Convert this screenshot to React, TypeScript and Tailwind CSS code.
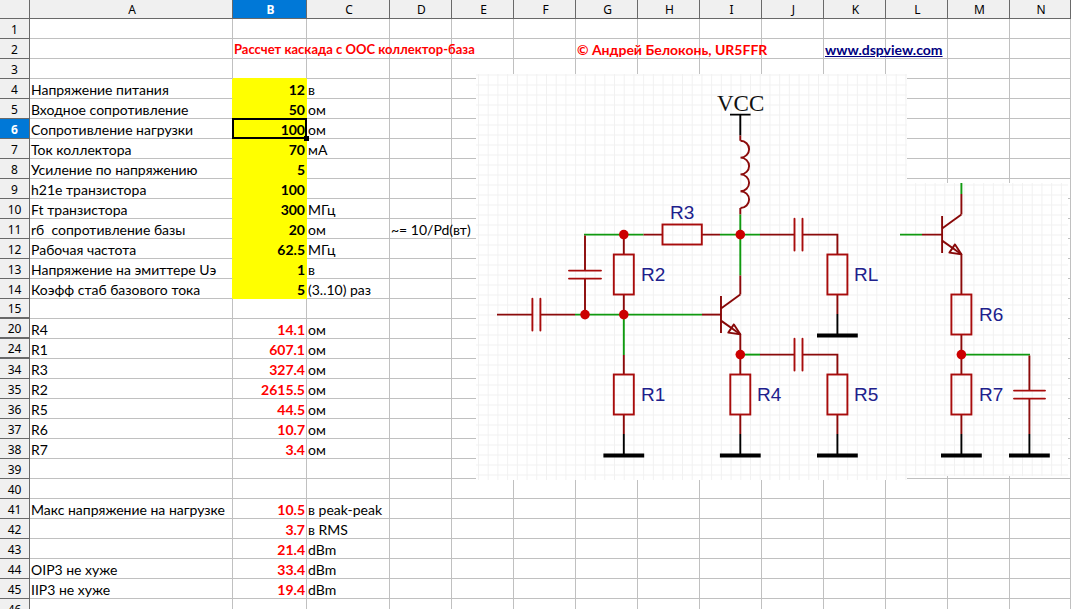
import { clsx } from "clsx";

type Tone = "input" | "result";

interface SheetRow {
  num: number;
  label?: string;
  value?: string;
  unit?: string;
  note?: string;
  tone?: Tone;
  // rows are hidden right below this one
  folded?: boolean;
}

const columns = ["A", "B", "C", "D", "E", "F", "G", "H", "I", "J", "K", "L", "M", "N"];
const activeColumn = "B";
const activeRow = 6;

const rows: SheetRow[] = [
  { num: 1 },
  { num: 2 },
  { num: 3 },
  { num: 4, label: "Напряжение питания", value: "12", unit: "в", tone: "input" },
  { num: 5, label: "Входное сопротивление", value: "50", unit: "ом", tone: "input" },
  { num: 6, label: "Сопротивление нагрузки", value: "100", unit: "ом", tone: "input" },
  { num: 7, label: "Ток коллектора", value: "70", unit: "мА", tone: "input" },
  { num: 8, label: "Усиление по напряжению", value: "5", tone: "input" },
  { num: 9, label: "h21e транзистора", value: "100", tone: "input" },
  { num: 10, label: "Ft транзистора", value: "300", unit: "МГц", tone: "input" },
  { num: 11, label: "rб  сопротивление базы", value: "20", unit: "ом", note: "~= 10/Pd(вт)", tone: "input" },
  { num: 12, label: "Рабочая частота", value: "62.5", unit: "МГц", tone: "input" },
  { num: 13, label: "Напряжение на эмиттере Uэ", value: "1", unit: "в", tone: "input" },
  { num: 14, label: "Коэфф стаб базового тока", value: "5", unit: "(3..10) раз", tone: "input" },
  { num: 15, folded: true },
  { num: 20, label: "R4", value: "14.1", unit: "ом", tone: "result", folded: true },
  { num: 24, label: "R1", value: "607.1", unit: "ом", tone: "result", folded: true },
  { num: 34, label: "R3", value: "327.4", unit: "ом", tone: "result" },
  { num: 35, label: "R2", value: "2615.5", unit: "ом", tone: "result" },
  { num: 36, label: "R5", value: "44.5", unit: "ом", tone: "result" },
  { num: 37, label: "R6", value: "10.7", unit: "ом", tone: "result" },
  { num: 38, label: "R7", value: "3.4", unit: "ом", tone: "result" },
  { num: 39 },
  { num: 40 },
  { num: 41, label: "Макс напряжение на нагрузке", value: "10.5", unit: "в peak-peak", tone: "result" },
  { num: 42, value: "3.7", unit: "в RMS", tone: "result" },
  { num: 43, value: "21.4", unit: "dBm", tone: "result" },
  { num: 44, label: "OIP3 не хуже", value: "33.4", unit: "dBm", tone: "result" },
  { num: 45, label: "IIP3 не хуже", value: "19.4", unit: "dBm", tone: "result" },
  { num: 46 },
];

const App = () => {
  return (
    <main className="relative h-screen w-full overflow-hidden bg-white">
      <table className="w-full table-fixed border-separate border-spacing-0 font-['Lato','Noto_Sans',sans-serif] text-black">
        <colgroup>
          <col className="w-[30px]" />
          <col className="w-[203px]" />
          <col className="w-[74px]" />
          <col className="w-[83px]" />
          {columns.slice(3, -1).map((name) => (
            <col key={name} className="w-[62px]" />
          ))}
          <col />
        </colgroup>
        <thead>
          <tr>
            <td className={clsx(headCell, "h-[19px] bg-[#f0f0f0]")} />
            {columns.map((name) => (
              <th
                key={name}
                scope="col"
                className={clsx(
                  headCell,
                  "h-[19px] pl-0.5",
                  name === activeColumn ? "bg-[#0078d7] font-bold text-white" : "bg-[#f0f0f0] font-normal",
                )}
              >
                {name}
              </th>
            ))}
          </tr>
        </thead>
        <tbody>
          {rows.map((row) => (
            <Row key={row.num} row={row} />
          ))}
        </tbody>
      </table>
      <AmplifierSchematic />
      <EmitterSchematic />
    </main>
  );
};
export default App;

const Row = ({ row }: { row: SheetRow }) => {
  const isInput = row.tone === "input";
  const isActive = row.num === activeRow;

  return (
    <tr>
      <th
        scope="row"
        className={clsx(
          headCell,
          "h-5",
          row.folded && "border-b-2",
          isActive ? "bg-[#0078d7] font-bold text-white" : "bg-[#f0f0f0] font-normal",
        )}
      >
        {row.num}
      </th>
      <td className={clsx(cell, "border-b-[#c0c0c0]", isInput ? "border-r-[#ffff00]" : "border-r-[#c0c0c0]")}>
        {row.label}
      </td>
      <td
        className={clsx(
          cell,
          "relative font-bold",
          row.num === 2 ? "text-left text-[13px] text-[#ff0000]" : "text-right",
          row.tone === "result" && "text-[#ff0000]",
          isInput && "bg-[#ffff00]",
          isInput || row.num === 3 ? "border-b-[#ffff00]" : "border-b-[#c0c0c0]",
          isInput ? "border-r-[#ffff00]" : "border-r-[#c0c0c0]",
        )}
      >
        {row.num === 2 ? "Рассчет каскада с ООС коллектор-база" : row.value}
        {isActive && (
          <span className="absolute -inset-px z-10 border-2 border-black">
            <span className="absolute -right-1 -bottom-1 size-[5px] bg-black" />
          </span>
        )}
      </td>
      <td className={clsx(cell, gridLine)}>{row.unit}</td>
      <td className={clsx(cell, gridLine)}>{row.note}</td>
      {columns.slice(4).map((name) => (
        <td key={name} className={clsx(cell, gridLine, "font-bold")}>
          {row.num === 2 && name === "G" && <span className="text-[#ff0000]">© Андрей Белоконь, UR5FFR</span>}
          {row.num === 2 && name === "K" && (
            <a href="http://www.dspview.com" className="text-[#000080] underline">
              www.dspview.com
            </a>
          )}
        </td>
      ))}
    </tr>
  );
};

// Schematic parts, drawn in sheet coordinates
const Grid = ({ id, x, y, width, height }: { id: string; x: number; y: number; width: number; height: number }) => (
  <>
    <defs>
      <pattern id={id} x="487.7" y="84.5" width="9.715" height="10" patternUnits="userSpaceOnUse">
        <path d="M0.5 0V10M0 0.5H9.715" stroke="#f1f1f1" strokeWidth="1" />
      </pattern>
    </defs>
    <rect x={x} y={y} width={width} height={height} fill="#fff" />
    <rect x={x} y={y} width={width} height={height} fill={`url(#${id})`} />
  </>
);

const Wire = ({ d }: { d: string }) => <path d={d} fill="none" stroke="#109a10" strokeWidth="1.9" />;
const Lead = ({ d }: { d: string }) => <path d={d} fill="none" stroke="#8b0a0a" strokeWidth="1.9" />;
const Plates = ({ d }: { d: string }) => (
  <path d={d} fill="none" stroke="#a80c0c" strokeWidth="1.9" strokeLinecap="round" />
);
const Dot = ({ x, y }: { x: number; y: number }) => <circle cx={x} cy={y} r="4.8" fill="#cc0000" />;

// vertical resistor, x is its axis and y the top of the body
const Resistor = ({ x, y }: { x: number; y: number }) => (
  <rect x={x - 10} y={y} width="20" height="40" fill="none" stroke="#a80c0c" strokeWidth="1.9" />
);

const Ground = ({ x, y }: { x: number; y: number }) => (
  <g stroke="#000">
    <path d={`M${x} ${y}v21`} strokeWidth="1.9" />
    <path d={`M${x - 20.4} ${y + 21.6}h40.8`} strokeWidth="4" />
  </g>
);

// npn transistor, x is the collector axis and y the base line
const Transistor = ({ x, y }: { x: number; y: number }) => (
  <g fill="none" stroke="#880808" strokeWidth="1.9" strokeLinejoin="round">
    <path d={`M${x - 19.3} ${y - 18.6}v37`} />
    <path d={`M${x - 19.3} ${y - 6}L${x} ${y - 20}`} />
    <path d={`M${x - 19.3} ${y + 6}L${x} ${y + 19.6}`} />
    <path d={`M${x - 6.4} ${y + 9.8}L${x - 12} ${y + 18}L${x} ${y + 19.6}Z`} />
  </g>
);

const Name = ({ x, y, children }: { x: number; y: number; children: string }) => (
  <text x={x} y={y} fill="#20208c" fontFamily="'Liberation Sans', Arial, sans-serif" fontSize="19">
    {children}
  </text>
);

const AmplifierSchematic = () => (
  <svg
    className="absolute top-[74px] left-[476px]"
    width="431"
    height="406"
    viewBox="476 74 431 406"
    role="img"
    aria-label="Схема каскада"
  >
    <Grid id="gridMain" x={476} y={74} width={431} height={406} />

    <text x="717" y="111" fontFamily="'Liberation Serif', 'Times New Roman', serif" fontSize="23" fill="#111">
      VCC
    </text>
    <path d="M730 114.6H750.6M740.3 114.6V135.5" stroke="#000" strokeWidth="1.9" />

    {/* collector choke */}
    <Lead d="M740.3 135.5V140.8M740.3 208V214.5" />
    <path
      d="M740.5 140.8A8.6 8.4 0 0 1 740.5 157.6A8.6 8.4 0 0 1 740.5 174.4A8.6 8.4 0 0 1 740.5 191.2A8.6 8.4 0 0 1 740.5 208"
      fill="none"
      stroke="#8b0a0a"
      strokeWidth="1.9"
    />
    <Wire d="M740.3 214.5V275.5" />

    {/* feedback branch */}
    <Wire d="M584 234.6H643.5M720 234.6H760" />
    <Lead d="M585 235.5V270.6M585 278.6V314.6" />
    <Plates d="M569 270.6H601M569 278.6H601" />
    <Lead d="M643.5 234.6H662.5M701.8 234.6H720" />
    <rect x="662.5" y="224.5" width="39.3" height="20" fill="none" stroke="#a80c0c" strokeWidth="1.9" />
    <Lead d="M623.8 234.6V254.5M623.8 294.5V314.6" />
    <Resistor x={623.8} y={254.5} />

    {/* input and base */}
    <Lead d="M497 314.6H532.4M540.4 314.6H575" />
    <Plates d="M532.4 298.8V330.6M540.4 298.8V330.6" />
    <Wire d="M575 314.6H702M623.8 314.6V355" />
    <Lead d="M702 314.6H721" />
    <Lead d="M623.8 355V374.5M623.8 414.5V434" />
    <Resistor x={623.8} y={374.5} />
    <Ground x={623.8} y={434} />

    <Lead d="M740.3 275.5V294.6M740.3 334V374.5M740.3 414.5V434" />
    <Transistor x={740.3} y={314.6} />
    <Resistor x={740.3} y={374.5} />
    <Ground x={740.3} y={434} />

    {/* load */}
    <Lead d="M760 234.6H794.5M802.5 234.6H837.4V254.5M837.4 294.5V314" />
    <Plates d="M794.5 218.8V250.6M802.5 218.8V250.6" />
    <Resistor x={837.4} y={254.5} />
    <Ground x={837.4} y={314} />

    {/* emitter branch */}
    <Wire d="M740.3 354.6H760" />
    <Lead d="M760 354.6H794.5M802.5 354.6H837.4V374.5M837.4 414.5V434" />
    <Plates d="M794.5 338.8V370.6M802.5 338.8V370.6" />
    <Resistor x={837.4} y={374.5} />
    <Ground x={837.4} y={434} />

    <Dot x={623.8} y={234.6} />
    <Dot x={740.3} y={234.6} />
    <Dot x={585} y={314.6} />
    <Dot x={623.8} y={314.6} />
    <Dot x={740.3} y={354.6} />

    <Name x={670} y={219}>R3</Name>
    <Name x={641} y={281}>R2</Name>
    <Name x={854} y={281}>RL</Name>
    <Name x={641} y={401}>R1</Name>
    <Name x={757} y={401}>R4</Name>
    <Name x={854} y={401}>R5</Name>
  </svg>
);

const EmitterSchematic = () => (
  <svg
    className="absolute top-[183px] left-[900px]"
    width="168"
    height="293"
    viewBox="900 183 168 293"
    role="img"
    aria-label="Вариант цепи эмиттера"
  >
    <Grid id="gridEmitter" x={900} y={183} width={168} height={293} />

    <Wire d="M961.4 183V194M900 234.6H922" />
    <Lead d="M961.4 194V214.6M922 234.6H942" />
    <Transistor x={961.4} y={234.6} />
    <Lead d="M961.4 254V294.5M961.4 334.5V374.5M961.4 414.5V434" />
    <Resistor x={961.4} y={294.5} />
    <Resistor x={961.4} y={374.5} />
    <Ground x={961.4} y={434} />

    <Wire d="M961.4 354.6H1030" />
    <Lead d="M1029.4 355.5V390.6M1029.4 398.6V434" />
    <Plates d="M1014 390.6H1045M1014 398.6H1045" />
    <Ground x={1029.4} y={434} />
    <Dot x={961.4} y={354.6} />

    <Name x={979} y={321}>R6</Name>
    <Name x={979} y={401}>R7</Name>
  </svg>
);

// Tailwind CSS constants
const headCell =
  "border-r border-b border-[#696969] px-0 pt-0.5 pb-0 text-center font-['Noto_Sans','Open_Sans',sans-serif] text-xs leading-4";
const cell = "h-5 whitespace-pre border-r border-b px-px pt-px pb-0 text-sm leading-[17px]";
const gridLine = "border-[#c0c0c0]";
